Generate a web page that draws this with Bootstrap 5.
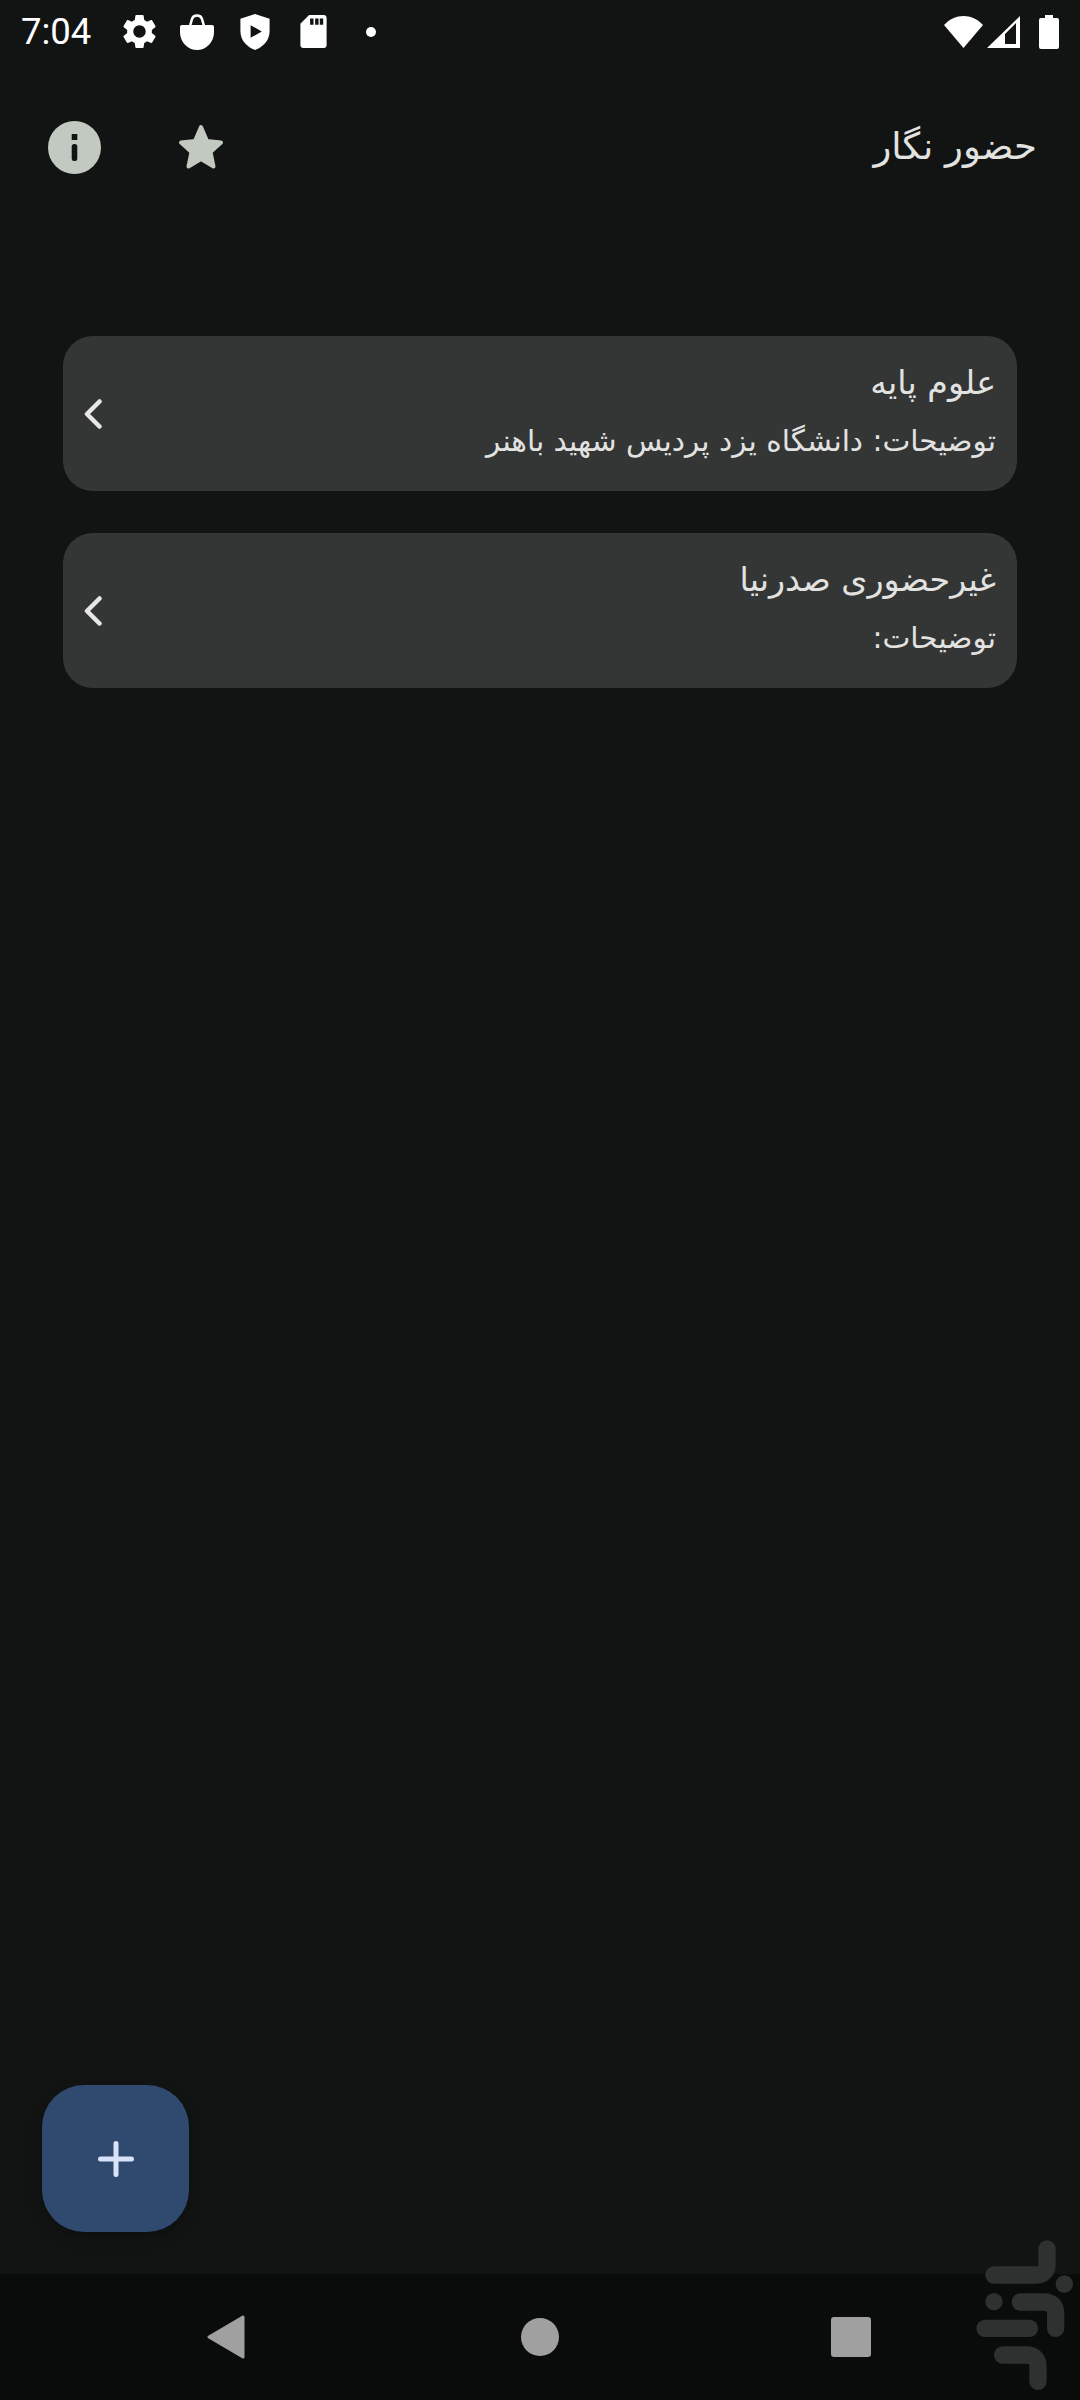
<!DOCTYPE html>
<html lang="fa">

<head>
    <meta charset="UTF-8">
    <meta name="viewport" content="width=device-width, initial-scale=1.0">
    <title>حضور نگار</title>
    <link href="https://cdn.jsdelivr.net/npm/bootstrap@5.3.2/dist/css/bootstrap.min.css" rel="stylesheet">
    <script src="https://cdn.jsdelivr.net/npm/bootstrap@5.3.2/dist/js/bootstrap.bundle.min.js"></script>
    <style>
        body { background: #121414; }
        svg { display: block; }
        .app-page { height: 2400px; background: #121414; font-family: "DejaVu Sans", sans-serif; color: #e2e3e1; }
        .status-row { height: 63px; padding: 0 21px 0 21px; color: #fff; }
        .status-time { font: 36.5px/63px Roboto, sans-serif; margin-right: 19px; color: #fff; }
        .status-slot { width: 58px; }
        .battery-icon { margin-left: 19px; }
        .top-row { height: 168px; padding: 0 43px 0 48px; }
        .top-title { font-size: 37px; font-weight: 400; margin: 0; }
        .star-btn { margin-left: 77px; }
        .course-list { padding: 105px 63px 0; gap: 42px; }
        .course-item { height: 155px; background: #343535; border-radius: 30px; color: #e2e3e1; padding: 0 21px; }
        .course-text { padding-bottom: 5px; }
        .course-name { font-size: 33.3px; line-height: 46px; }
        .course-desc { font-size: 29.6px; line-height: 42px; margin-top: 14px; }
        .fab-area { padding: 0 0 42px 42px; }
        .fab-add { width: 147px; height: 147px; background: #30496f; border: 0; border-radius: 42px; padding: 0; box-shadow: 0 6px 14px rgba(0, 0, 0, .25); }
        .nav-row { height: 126px; background: #0a0c0c; padding: 0 209px 0 207px; }
        .nav-dot { width: 38px; height: 38px; border-radius: 50%; background: #9fa09f; margin-left: 4px; }
        .nav-box { width: 40px; height: 40px; border-radius: 3px; background: #9fa09f; }
        .store-mark { position: absolute; right: 1px; bottom: 6px; }
    </style>
</head>

<body>
    <div class="app-page d-flex flex-column position-relative overflow-hidden">

        <!-- Status bar -->
        <div class="status-row d-flex align-items-center">
            <span class="status-time">7:04</span>
            <div class="status-slot d-flex justify-content-center">
                <svg width="33" height="33" viewBox="2.6 2.4 18.8 19.2" fill="#fff"><path d="M19.14 12.94c.04-.3.06-.61.06-.94 0-.32-.02-.64-.07-.94l2.03-1.58c.18-.14.23-.41.12-.61l-1.92-3.32c-.12-.22-.37-.29-.59-.22l-2.39.96c-.5-.38-1.03-.7-1.62-.94l-.36-2.54c-.04-.24-.24-.41-.48-.41h-3.84c-.24 0-.43.17-.47.41l-.36 2.54c-.59.24-1.13.57-1.62.94l-2.39-.96c-.22-.08-.47 0-.59.22L2.74 8.87c-.12.21-.08.47.12.61l2.03 1.58c-.05.3-.09.63-.09.94s.02.64.07.94l-2.03 1.58c-.18.14-.23.41-.12.61l1.92 3.32c.12.22.37.29.59.22l2.39-.96c.5.38 1.03.7 1.62.94l.36 2.54c.05.24.24.41.48.41h3.84c.24 0 .44-.17.47-.41l.36-2.54c.59-.24 1.13-.56 1.62-.94l2.39.96c.22.08.47 0 .59-.22l1.92-3.32c.12-.22.07-.47-.12-.61l-2.01-1.58zM12 15.6c-1.98 0-3.6-1.62-3.6-3.6s1.62-3.6 3.6-3.6 3.6 1.62 3.6 3.6-1.62 3.6-3.6 3.6z"/></svg>
            </div>
            <div class="status-slot d-flex justify-content-center">
                <svg width="34" height="36" viewBox="0 0 34 36"><path d="M0 13Q0 11 2 11H32Q34 11 34 13V18A17 18 0 0 1 0 18Z" fill="#fff"/><path d="M10 12L12 5Q13 1.5 17 1.5Q21 1.5 22 5L24 12" fill="none" stroke="#fff" stroke-width="2.6"/></svg>
            </div>
            <div class="status-slot d-flex justify-content-center">
                <svg width="30" height="36" viewBox="0 0 30 37"><path d="M15 0L30 5V17Q30 31 15 37Q0 31 0 17V5Z" fill="#fff"/><path d="M10.5 11.5L22 18L10.5 24.5Z" fill="#121414"/></svg>
            </div>
            <div class="status-slot d-flex justify-content-center">
                <svg width="27" height="33" viewBox="0 0 27 34"><path d="M9 0H24Q27 0 27 3V31Q27 34 24 34H3Q0 34 0 31V9Z" fill="#fff"/><path d="M10 3.5h3.5V10H10zM15.2 3.5h3.5V10h-3.5zM20 3.5h3.5V10H20z" fill="#121414"/></svg>
            </div>
            <div class="status-slot d-flex justify-content-center">
                <svg width="10" height="10" viewBox="0 0 10 10"><circle cx="5" cy="5" r="5" fill="#fff"/></svg>
            </div>
            <div class="ms-auto d-flex align-items-center">
                <svg width="39" height="32" viewBox="0 0 39 32"><path d="M0 9C11-3 28-3 39 9L19.5 32Z" fill="#fff"/></svg>
                <svg class="ms-1" width="33" height="32" viewBox="0 0 33 32"><path fill-rule="evenodd" d="M0 32L33 0V32ZM18 18V28H29V7Z" fill="#fff"/></svg>
                <svg class="battery-icon" width="20" height="34" viewBox="0 0 20 34"><path d="M6 0H14V3H18Q20 3 20 5V32Q20 34 18 34H2Q0 34 0 32V5Q0 3 2 3H6Z" fill="#fff"/></svg>
            </div>
        </div>

        <!-- Toolbar -->
        <div class="top-row d-flex align-items-center">
            <svg width="53" height="53" viewBox="0 0 53 53"><circle cx="26.5" cy="26.5" r="26.5" fill="#c1c9c0"/><rect x="23.7" y="13" width="5.600" height="6" fill="#121414"/><rect x="23.7" y="23" width="5.600" height="17" rx="2.500" fill="#121414"/></svg>
            <svg class="star-btn" width="46" height="46" viewBox="0 0 46 46"><path d="M23 3L29 17L43 18.500L32.500 28L35.500 42.500L23 35L10.500 42.500L13.500 28L3 18.500L17 17Z" fill="#c1c9c0" stroke="#c1c9c0" stroke-width="4" stroke-linejoin="round"/></svg>
            <h1 class="top-title ms-auto" dir="rtl">حضور نگار</h1>
        </div>

        <!-- Course list -->
        <div class="course-list d-flex flex-column">
            <div class="course-item d-flex align-items-center justify-content-between" dir="rtl">
                <div class="course-text">
                    <div class="course-name">علوم پایه</div>
                    <div class="course-desc">توضیحات: دانشگاه یزد پردیس شهید باهنر</div>
                </div>
                <svg width="18" height="30" viewBox="0 0 18 30"><path d="M15.500 2.500L3 15L15.500 27.500" fill="none" stroke="#e6e7e6" stroke-width="4.500" stroke-linecap="round" stroke-linejoin="round"/></svg>
            </div>
            <div class="course-item d-flex align-items-center justify-content-between" dir="rtl">
                <div class="course-text">
                    <div class="course-name">غیرحضوری صدرنیا</div>
                    <div class="course-desc">توضیحات:</div>
                </div>
                <svg width="18" height="30" viewBox="0 0 18 30"><path d="M15.500 2.500L3 15L15.500 27.500" fill="none" stroke="#e6e7e6" stroke-width="4.500" stroke-linecap="round" stroke-linejoin="round"/></svg>
            </div>
        </div>

        <!-- Add button -->
        <div class="fab-area flex-grow-1 d-flex align-items-end">
            <button class="btn fab-add d-flex align-items-center justify-content-center" type="button" aria-label="افزودن">
                <svg width="36" height="36" viewBox="0 0 36 36"><path d="M18 2.500V33.500M2.500 18H33.500" fill="none" stroke="#d8e3fa" stroke-width="5" stroke-linecap="round"/></svg>
            </button>
        </div>

        <!-- Navigation bar -->
        <div class="nav-row d-flex align-items-center justify-content-between">
            <svg width="38" height="44" viewBox="0 0 38 44"><path d="M2 22L36 2V42Z" fill="#9fa09f" stroke="#9fa09f" stroke-width="3" stroke-linejoin="round"/></svg>
            <div class="nav-dot"></div>
            <div class="nav-box"></div>
        </div>

        <!-- Store mark -->
        <svg class="store-mark" width="103" height="157" viewBox="587 110 309 471"><g fill="none" stroke="#2f3030" stroke-width="52" stroke-linecap="round"><path d="M800 146V190Q800 224 766 224H641"/><path d="M720 305H790Q826 305 826 341V384"/><path d="M614 384H747"/><path d="M667 464H738Q773 464 773 500V543"/></g><circle cx="852" cy="251" r="26" fill="#2f3030"/><circle cx="641" cy="304" r="26" fill="#2f3030"/></svg>
    </div>
</body>

</html>
